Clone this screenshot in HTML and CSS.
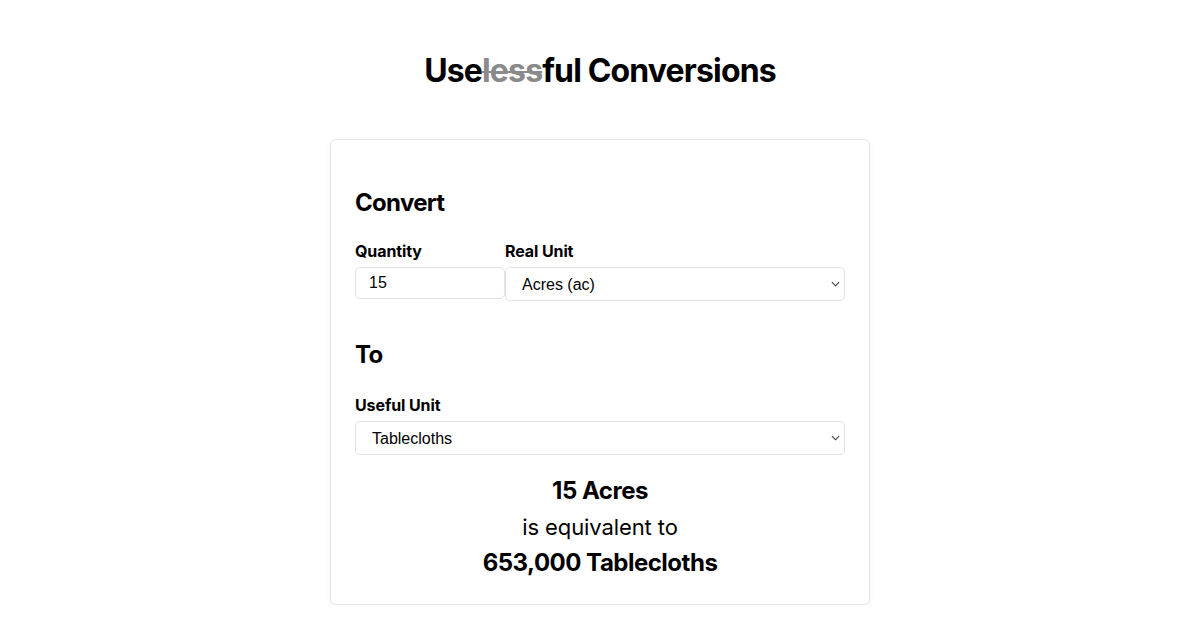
FILE: index.html
```html
<!DOCTYPE html>
<html lang="en">
<head>
<meta charset="utf-8">
<title>Useless Conversions</title>
<link rel="stylesheet" href="styles.css">
</head>
<body>
<main class="page">
  <h1 class="title">Use<span class="strike">less</span>ful Conversions</h1>
  <section class="card">
    <h2 class="section-title">Convert</h2>
    <div class="row">
      <label class="field field-qty">
        <span class="label">Quantity</span>
        <input class="input" type="text" value="15">
      </label>
      <label class="field field-grow">
        <span class="label">Real Unit</span>
        <span class="select-wrap">
          <select class="select"><option>Acres (ac)</option></select>
          <svg class="chev" viewBox="0 0 10 6" width="9" height="6"><path d="M1 1l4 4 4-4" fill="none" stroke="#333" stroke-width="1.2"/></svg>
        </span>
      </label>
    </div>
    <h2 class="section-title to">To</h2>
    <label class="field">
      <span class="label">Useful Unit</span>
      <span class="select-wrap">
        <select class="select"><option>Tablecloths</option></select>
        <svg class="chev" viewBox="0 0 10 6" width="9" height="6"><path d="M1 1l4 4 4-4" fill="none" stroke="#333" stroke-width="1.2"/></svg>
      </span>
    </label>
    <div class="result">
      <p class="result-strong">15 Acres</p>
      <p class="result-mid">is equivalent to</p>
      <p class="result-strong">653,000 Tablecloths</p>
    </div>
  </section>
</main>
</body>
</html>
```

FILE: styles.css
```css
* { box-sizing: border-box; }
html, body { margin: 0; padding: 0; background: #fff; }
body { font-family: Inter, "Noto Sans", sans-serif; color: #000; }
.page { display: flex; flex-direction: column; align-items: center; padding-top: 51px; }
.title { font-size: 32px; font-weight: 700; margin: 0; line-height: 40px; letter-spacing: -0.85px; }
.strike { color: #8a8a8a; text-decoration: line-through; text-decoration-thickness: 2px; }
.card {
  margin-top: 48px;
  width: 540px;
  border: 1px solid #e6e6e6;
  border-radius: 6px;
  box-shadow: 0 2px 6px rgba(0,0,0,0.06);
  padding: 48px 24px 23px;
  display: flex;
  flex-direction: column;
}
.section-title { font-size: 24px; font-weight: 700; margin: 0; line-height: 30px; letter-spacing: -0.7px; }
.section-title.to { margin-top: 39px; }
.row { display: flex; margin-top: 23px; }
.field { display: flex; flex-direction: column; }
.section-title.to + .field { margin-top: 25px; }
.field-qty { width: 150px; }
.field-grow { flex: 1; }
.label { font-size: 16px; font-weight: 700; line-height: 20px; margin-bottom: 6px; letter-spacing: -0.1px; }
.input {
  height: 32px;
  border: 1px solid #e3e3e3;
  border-radius: 5px;
  padding: 0 13px;
  font-family: "Liberation Sans", Arial, sans-serif;
  font-size: 16px;
  color: #000;
  outline: none;
  width: 100%;
}
.select-wrap { position: relative; display: block; }
.select {
  appearance: none;
  -webkit-appearance: none;
  width: 100%;
  height: 34px;
  border: 1px solid #e3e3e3;
  border-radius: 5px;
  background: #fff;
  padding: 0 16px;
  font-family: "Liberation Sans", Arial, sans-serif;
  font-size: 16px;
  color: #000;
  outline: none;
}
.chev { position: absolute; right: 5px; top: 14px; width: 9px; height: 6px; pointer-events: none; }
.result { display: flex; flex-direction: column; align-items: center; margin-top: 18px; }
.result p { margin: 0; line-height: 36px; }
.result-strong { font-size: 24px; font-weight: 700; letter-spacing: -0.5px; }
.result-mid { font-size: 22px; font-weight: 400; letter-spacing: -0.1px; }
```
